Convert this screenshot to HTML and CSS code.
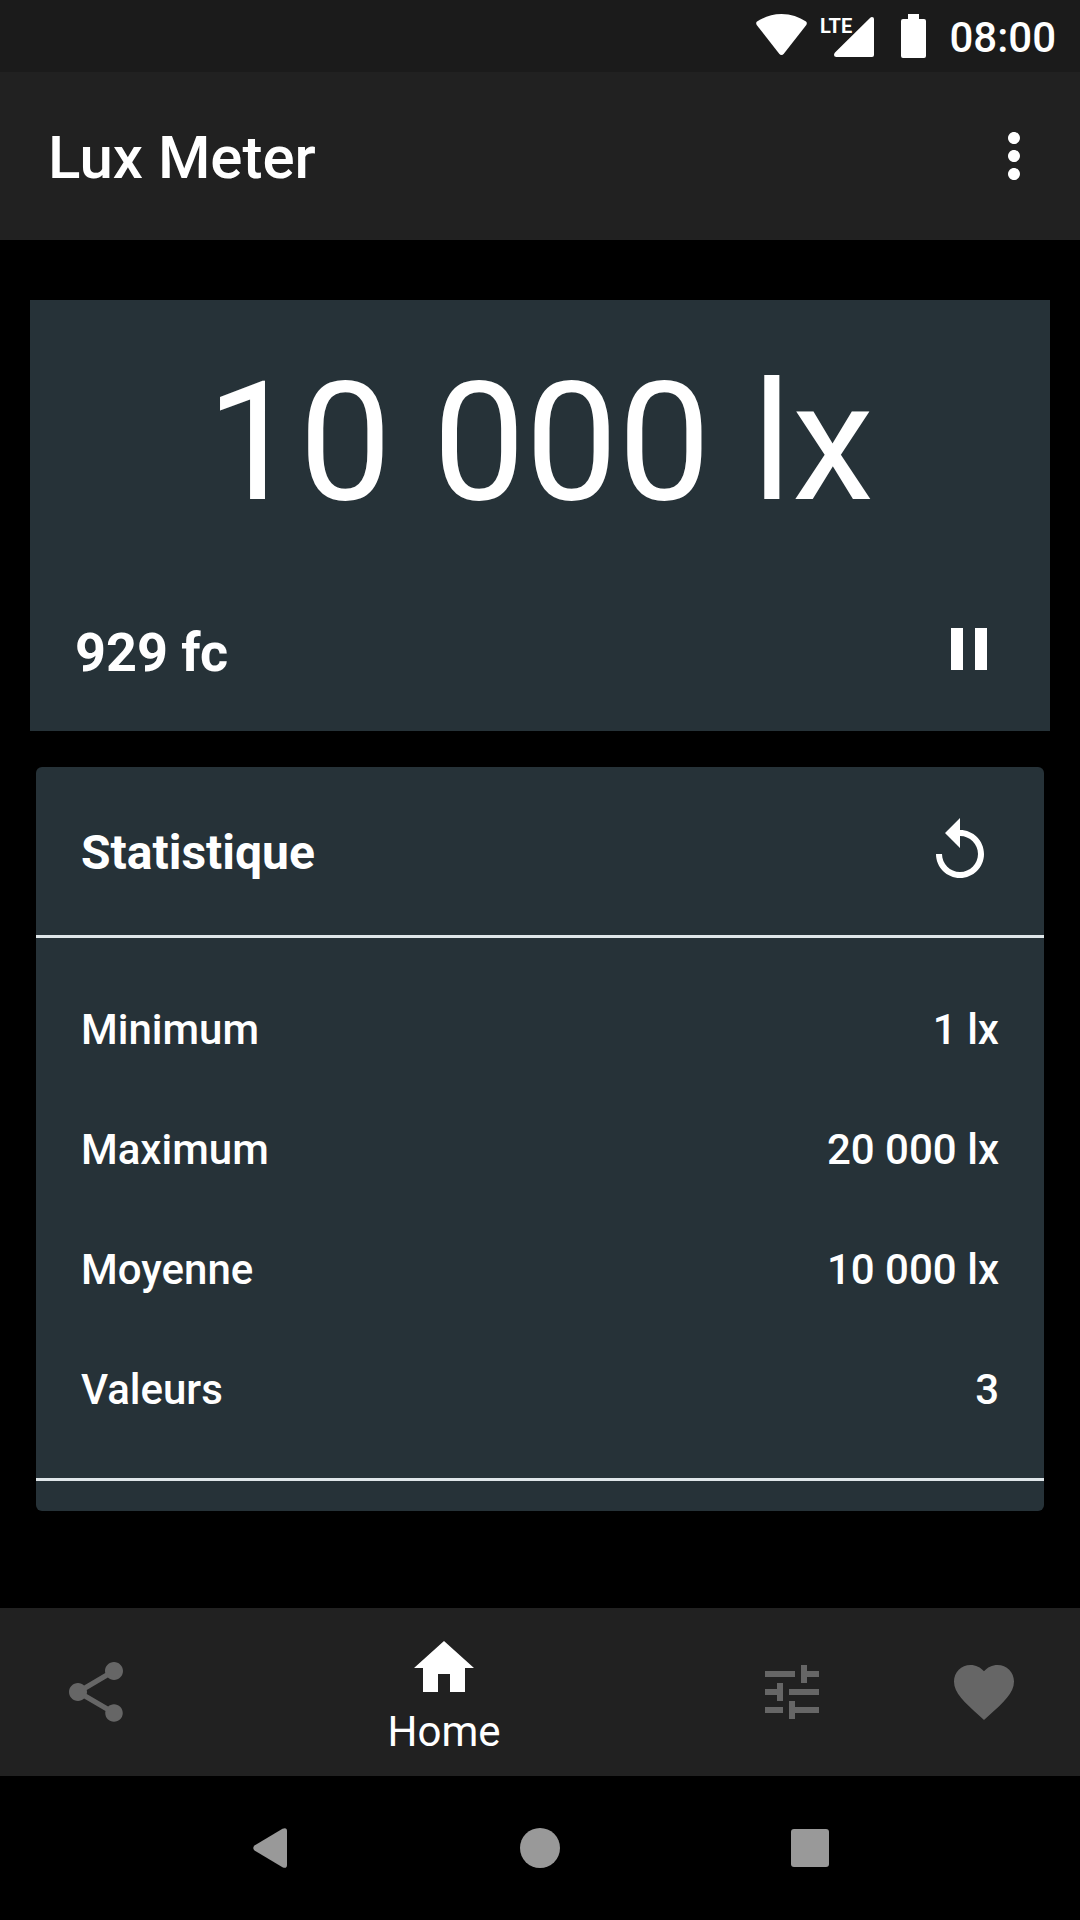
FILE: index.html
```html
<!DOCTYPE html>
<html lang="fr">
<head>
  <meta charset="UTF-8" />
  <meta name="viewport" content="width=device-width, initial-scale=1.0"/>
  <title>Lux Meter</title>
  <link rel="stylesheet" href="styles.css">
</head>
<body>

  <div class="status-bar">
    <svg class="wifi" width="51" height="48" viewBox="0 0 51 48"><path d="M25.5 0C35 0 43 3 50 7.500Q51.500 9 50.300 11L28 39.500Q25.500 42.500 23 39.500L.7 11Q-.5 9 1 7.500C8 3 16 0 25.500 0z"/></svg>
    <svg class="signal" width="54" height="48" viewBox="0 0 54 48">
      <path d="M16.500 43Q14 43 14 41 14 39.500 15 38.500L50 4Q51 3 52 3 54 3 54 5V41Q54 43 52 43z"/>
      <text x="0" y="19">LTE</text>
    </svg>
    <svg class="battery" width="25" height="48" viewBox="0 0 25 48"><path d="M7 0h11v5h5q2 0 2 2v35q0 2-2 2H2q-2 0-2-2V7q0-2 2-2h5z"/></svg>
    <span class="time">08:00</span>
  </div>

  <header class="app-bar">
    <h1>Lux Meter</h1>
    <button class="icon-btn" aria-label="Menu">
      <svg viewBox="0 0 24 24"><path d="M12 8c1.100 0 2-.9 2-2s-.9-2-2-2-2 .9-2 2 .9 2 2 2zm0 2c-1.100 0-2 .9-2 2s.9 2 2 2 2-.9 2-2-.9-2-2-2zm0 6c-1.100 0-2 .9-2 2s.9 2 2 2 2-.9 2-2-.9-2-2-2z"/></svg>
    </button>
  </header>

  <main>
    <section class="reading">
      <div class="lux">10 000 lx</div>
      <div class="reading-row">
        <span class="candles">929 fc</span>
        <button class="icon-btn" aria-label="Pause">
          <svg viewBox="0 0 24 24"><path d="M6 19h4V5H6v14zm8-14v14h4V5h-4z"/></svg>
        </button>
      </div>
    </section>

    <section class="stats">
      <div class="stats-head">
        <h2>Statistique</h2>
        <button class="icon-btn" aria-label="Reset">
          <svg viewBox="0 0 24 24"><path d="M12 5V1L7 6l5 5V7c3.310 0 6 2.690 6 6s-2.690 6-6 6-6-2.690-6-6H4c0 4.420 3.580 8 8 8s8-3.580 8-8-3.580-8-8-8z"/></svg>
        </button>
      </div>
      <div class="stats-body">
        <table>
          <tr><th scope="row">Minimum</th><td>1 lx</td></tr>
          <tr><th scope="row">Maximum</th><td>20 000 lx</td></tr>
          <tr><th scope="row">Moyenne</th><td>10 000 lx</td></tr>
          <tr><th scope="row">Valeurs</th><td>3</td></tr>
        </table>
      </div>
    </section>
  </main>

  <!-- Bottom Navigation -->
  <nav class="bottom-nav">
    <a href="#share" aria-label="Share">
      <svg viewBox="0 0 24 24"><path d="M18 16.080c-.76 0-1.440.3-1.960.77L8.910 12.700c.05-.23.09-.46.09-.7s-.04-.47-.09-.7l7.050-4.110c.54.5 1.250.81 2.040.81 1.660 0 3-1.340 3-3s-1.340-3-3-3-3 1.340-3 3c0 .24.04.47.09.7L8.040 9.810C7.500 9.310 6.790 9 6 9c-1.660 0-3 1.340-3 3s1.340 3 3 3c.79 0 1.500-.31 2.040-.81l7.120 4.160c-.05.21-.08.43-.08.65 0 1.610 1.310 2.920 2.920 2.920s2.920-1.310 2.920-2.920-1.310-2.920-2.920-2.920z"/></svg>
    </a>
    <a href="#home" class="active">
      <svg viewBox="0 0 24 24"><path d="M10 20v-6h4v6h5v-8h3L12 3 2 12h3v8z"/></svg>
      <span>Home</span>
    </a>
    <a href="#settings" aria-label="Settings">
      <svg viewBox="0 0 24 24"><path d="M3 17v2h6v-2H3zM3 5v2h10V5H3zm10 16v-2h8v-2h-8v-2h-2v6h2zM7 9v2H3v2h4v2h2V9H7zm14 4v-2H11v2h10zm-6-4h2V7h4V5h-4V3h-2v6z"/></svg>
    </a>
    <a href="#favorite" aria-label="Favorite">
      <svg viewBox="0 0 24 24"><path d="M12 21.350l-1.450-1.320C5.400 15.360 2 12.280 2 8.500 2 5.420 4.420 3 7.500 3c1.740 0 3.410.81 4.500 2.090C13.090 3.810 14.760 3 16.500 3 19.580 3 22 5.420 22 8.500c0 3.780-3.400 6.860-8.550 11.540L12 21.350z"/></svg>
    </a>
  </nav>

  <div class="system-nav">
    <button aria-label="Back">
      <svg width="34" height="40" viewBox="0 0 34 40"><path d="M1.500 17.500 29.500.7Q34-1 34 3V37Q34 41 29.500 39.300L1.500 22.500Q-1 20 1.500 17.500z"/></svg>
    </button>
    <button aria-label="Home">
      <svg width="40" height="40" viewBox="0 0 40 40"><circle cx="20" cy="20" r="20"/></svg>
    </button>
    <button aria-label="Recent apps">
      <svg width="38" height="38" viewBox="0 0 38 38"><rect width="38" height="38" rx="3"/></svg>
    </button>
  </div>

</body>
</html>
```
FILE: styles.css
```css
:root {
  --bar: #212121;
  --status: #1b1b1b;
  --card: #263238;
  --line: #dfe6e9;
  --text: #fff;
  --muted: #666;
  --system: #999;
}

* {
  margin: 0;
  padding: 0;
  box-sizing: border-box;
}

body {
  font-family: Roboto, sans-serif;
  background: #000;
  color: var(--text);
  min-height: 100vh;
  display: flex;
  flex-direction: column;
}

svg {
  display: block;
  fill: currentColor;
}

button {
  background: none;
  border: none;
  color: inherit;
  cursor: pointer;
}

.status-bar {
  display: flex;
  justify-content: flex-end;
  align-items: center;
  height: 72px;
  padding: 4px 24px 0;
  background: var(--status);
}

.status-bar .wifi {
  margin-right: 13px;
}

.status-bar .signal {
  margin-right: 27px;
}

.status-bar .signal text {
  font-size: 20px;
  font-weight: 700;
}

.status-bar .battery {
  margin-right: 23px;
}

.time {
  font-size: 42px;
  font-weight: 500;
  padding-bottom: 2px;
}

.app-bar {
  display: flex;
  justify-content: space-between;
  align-items: center;
  height: 168px;
  padding: 0 30px 0 48px;
  background: var(--bar);
}

.app-bar h1 {
  font-size: 60px;
  font-weight: 500;
  padding-top: 2px;
}

.icon-btn svg {
  width: 72px;
  height: 72px;
}

main {
  flex: 1;
  padding: 60px 0;
}

.reading {
  margin: 0 30px 36px;
  padding: 46px 45px;
  background: var(--card);
}

.lux {
  font-size: 165px;
  line-height: 194px;
  text-align: center;
  margin-bottom: 73px;
}

.reading-row {
  display: flex;
  justify-content: space-between;
  align-items: flex-end;
}

.candles {
  font-size: 54px;
  line-height: 64px;
  font-weight: 700;
}

.stats {
  margin: 0 36px;
  padding-bottom: 30px;
  border-radius: 6px;
  background: var(--card);
}

.stats-head {
  display: flex;
  justify-content: space-between;
  align-items: center;
  height: 168px;
  padding: 0 48px 0 45px;
}

.stats-head h2 {
  font-size: 48px;
  font-weight: 700;
  padding-top: 2px;
}

.stats-body {
  padding: 31px 45px 29px;
  border-top: 3px solid var(--line);
  border-bottom: 3px solid var(--line);
}

table {
  width: 100%;
  border-collapse: collapse;
}

th,
td {
  height: 120px;
  font-size: 42px;
  font-weight: 500;
  text-align: left;
}

td {
  text-align: right;
}

.bottom-nav {
  display: flex;
  height: 168px;
  background: var(--bar);
}

.bottom-nav a {
  display: flex;
  flex-direction: column;
  align-items: center;
  justify-content: center;
  width: 192px;
  color: var(--muted);
  text-decoration: none;
}

.bottom-nav a.active {
  flex: 1;
  justify-content: flex-start;
  padding-top: 24px;
  color: var(--text);
}

.bottom-nav svg {
  width: 72px;
  height: 72px;
}

.bottom-nav span {
  font-size: 42px;
  line-height: 56px;
}

.system-nav {
  display: flex;
  justify-content: center;
  height: 144px;
  color: var(--system);
}

.system-nav button {
  display: flex;
  align-items: center;
  justify-content: center;
  width: 25%;
}
```
